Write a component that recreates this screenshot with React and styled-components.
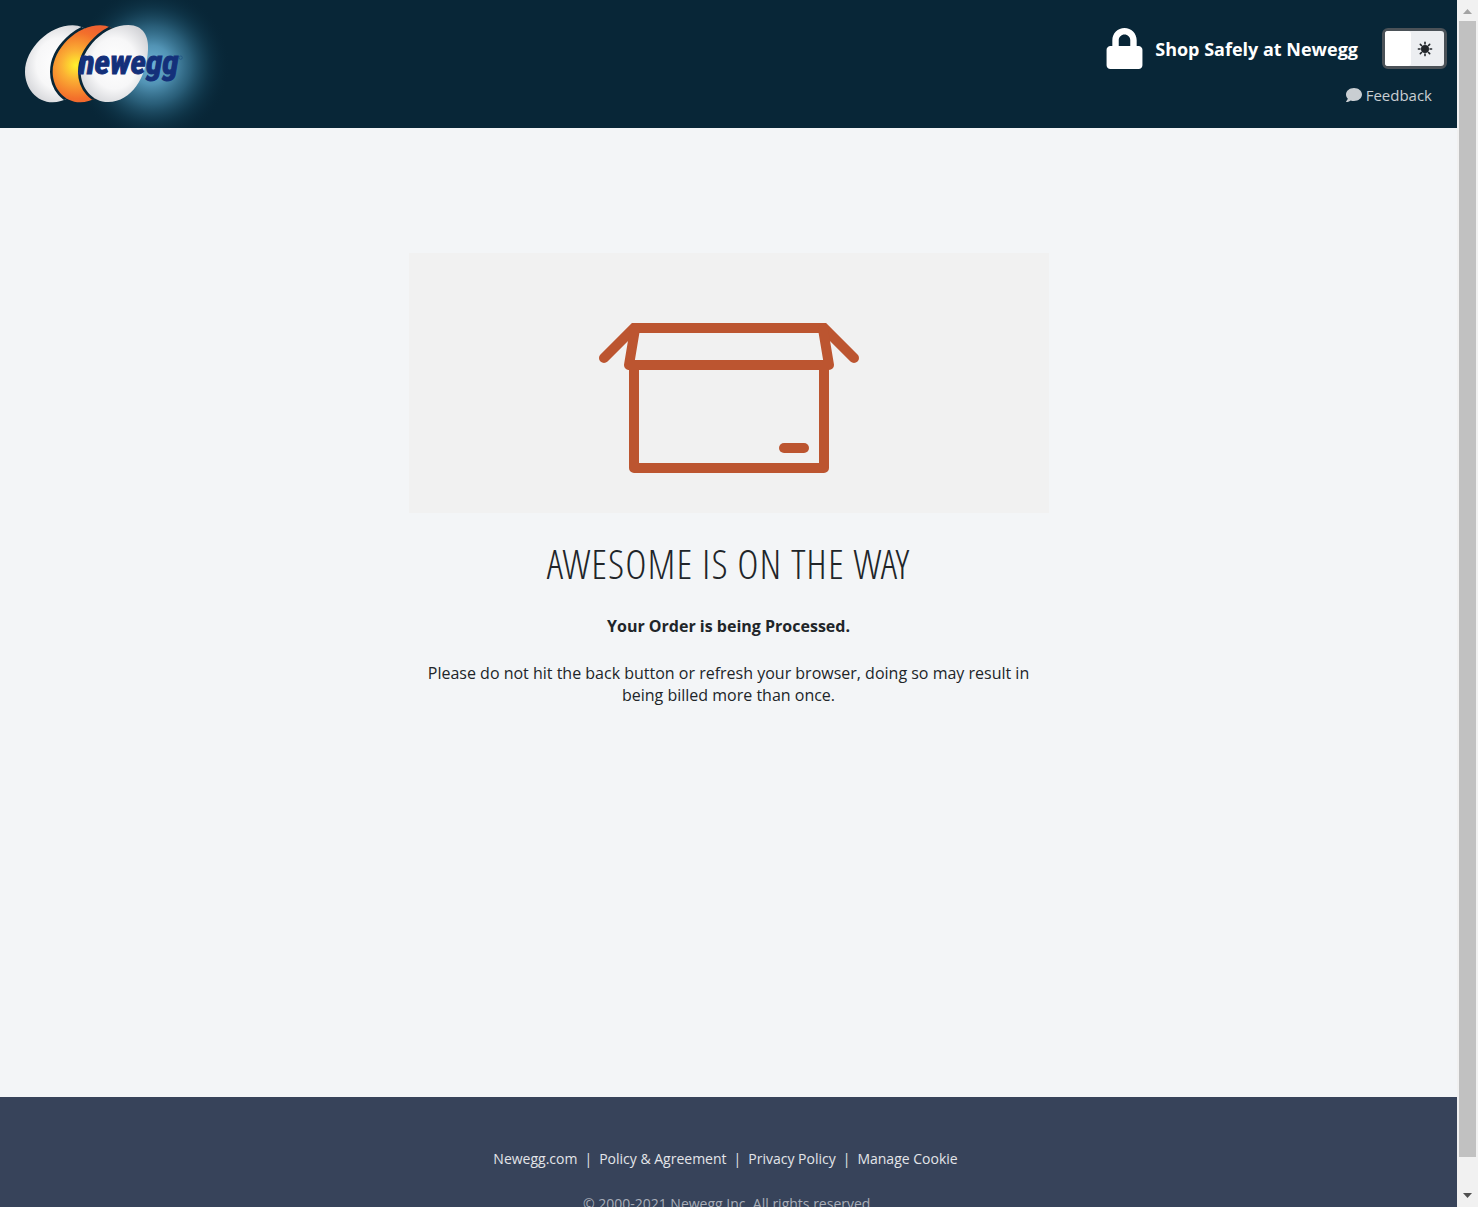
import React from "react";
import styled, { createGlobalStyle } from "styled-components";
import { FaLock, FaComment } from "react-icons/fa";

const GlobalStyle = createGlobalStyle`
  * { box-sizing: border-box; }
  body {
    margin: 0;
    background: #f3f5f7;
    color: #212529;
    font-family: "Open Sans", "Noto Sans", sans-serif;
    font-size: 16px;
    line-height: 22px;
  }
`;

const Shell = styled.div`
  display: flex;
  height: 100vh;
  overflow: hidden;
`;

const Page = styled.div`
  flex: 1;
  min-width: 0;
  overflow: hidden;
`;

const Header = styled.header`
  display: flex;
  justify-content: space-between;
  height: 128px;
  background: #082637;
  color: #fff;
`;

const LogoLink = styled.a`
  display: block;
  line-height: 0;
`;

const HeaderSide = styled.div`
  display: flex;
  flex-direction: column;
  align-items: flex-end;
  gap: 15px;
  padding: 28px 10px 0 0;
`;

const SafeRow = styled.div`
  display: flex;
  align-items: center;
`;

const SafeText = styled.strong`
  margin: 0 24px 0 10px;
  font-size: 18px;
  font-weight: 700;
`;

const Toggle = styled.label`
  display: grid;
  grid-template-columns: 26px 1fr;
  width: 65px;
  height: 41px;
  border: 3px solid #4b5258;
  border-radius: 6px;
  background: #eceef1;
  color: #212529;
  cursor: pointer;
`;

const ToggleInput = styled.input`
  appearance: none;
  margin: 0;
  background: #fff;
  border-radius: 3px;
  cursor: pointer;
`;

const ToggleIcon = styled.span`
  display: flex;
  align-items: center;
  justify-content: center;
  padding-right: 5px;
`;

const FeedbackLink = styled.a`
  display: flex;
  align-items: center;
  gap: 4px;
  margin-right: 15px;
  color: #c9ced2;
  font-size: 15px;
  text-decoration: none;
`;

const Main = styled.main`
  display: flex;
  flex-direction: column;
  align-items: center;
  min-height: calc(100vh - 238px);
  padding-top: 125px;
  text-align: center;
`;

const Message = styled.section`
  width: 100%;
  max-width: 640px;
`;

const Illustration = styled.svg`
  display: block;
  width: 100%;
  background: #f1f1f1;
`;

const Title = styled.h1`
  margin: 26px 0 0;
  font-family: "Open Sans Condensed Light", "Open Sans Condensed", "Open Sans", sans-serif;
  font-size: 41px;
  font-weight: 300;
  line-height: 48px;
  letter-spacing: 1px;
  text-transform: uppercase;
`;

const Status = styled.p`
  margin: 28px 0 0;
  font-weight: 700;
`;

const Note = styled.p`
  margin: 25px 0 0;
`;

const Footer = styled.footer`
  padding: 51px 0 32px;
  background: #37435a;
  color: #e3e5e9;
  font-size: 14px;
  text-align: center;
`;

const FooterNav = styled.nav`
  display: flex;
  justify-content: center;
  gap: 7px;
  padding-right: 6px;
`;

const FooterLink = styled.a`
  color: inherit;
  text-decoration: none;
`;

const Copyright = styled.p`
  margin: 23px 0 0;
  color: #a9aeb8;
`;

const ScrollRail = styled.div`
  display: flex;
  flex-direction: column;
  align-items: center;
  width: 21px;
  background: #f1f1f1;
`;

const ScrollArrow = styled.svg`
  flex: none;
  width: 17px;
  height: 21px;
  fill: ${(p) => p.$color};
`;

const ScrollThumb = styled.div`
  flex: 1;
  width: 17px;
  margin-bottom: 29px;
  background: #c1c1c1;
`;

const EGG =
  "M385 75C430 75 447 110 444 150C440 230 395 306 325 306C275 306 242 262 242 215C242 145 315 75 385 75Z";

function Logo() {
  return (
    <svg width="240" height="128" viewBox="0 0 720 384" role="img" aria-label="Newegg">
      <defs>
        <radialGradient id="glow">
          <stop offset="0" stopColor="#6fb4d8" />
          <stop offset="0.25" stopColor="#5a9fc2" stopOpacity="0.9" />
          <stop offset="0.5" stopColor="#3d7f9f" stopOpacity="0.62" />
          <stop offset="0.75" stopColor="#215973" stopOpacity="0.25" />
          <stop offset="1" stopColor="#082637" stopOpacity="0" />
        </radialGradient>
        <radialGradient id="shell" cx="0.5" cy="0.5" r="0.6">
          <stop offset="0" stopColor="#fff" />
          <stop offset="0.55" stopColor="#f7f7f8" />
          <stop offset="1" stopColor="#cfd0d4" />
        </radialGradient>
        <radialGradient id="yolk" gradientUnits="userSpaceOnUse" cx="312" cy="195" r="125">
          <stop offset="0" stopColor="#fff22d" />
          <stop offset="0.35" stopColor="#fbb034" />
          <stop offset="0.8" stopColor="#f36f2b" />
          <stop offset="1" stopColor="#ee6230" />
        </radialGradient>
        <clipPath id="clipLeft">
          <path d={EGG} transform="translate(-167 1)" />
        </clipPath>
        <clipPath id="clipMiddle">
          <path d={EGG} transform="translate(-84 1)" />
        </clipPath>
      </defs>
      <circle cx="455" cy="195" r="235" fill="url(#glow)" />
      <path d={EGG} transform="translate(-167 1)" fill="url(#shell)" />
      <g clipPath="url(#clipLeft)">
        <path d={EGG} transform="translate(-84 1)" fill="none" stroke="#082637" strokeWidth="16" />
      </g>
      <path d={EGG} transform="translate(-84 1)" fill="url(#yolk)" />
      <g clipPath="url(#clipMiddle)">
        <path d={EGG} fill="none" stroke="#082637" strokeWidth="16" />
      </g>
      <path d={EGG} fill="url(#shell)" />
      <text
        x="236"
        y="222"
        fill="#14307a"
        stroke="#14307a"
        strokeWidth="3"
        fontFamily="'Liberation Sans Narrow', 'Roboto Condensed', 'Liberation Sans', sans-serif"
        fontSize="100"
        fontStyle="italic"
        fontWeight="700"
      >
        newegg
      </text>
      <circle cx="542" cy="173" r="5" fill="none" stroke="#1d4f83" strokeWidth="2" />
    </svg>
  );
}

function SunIcon() {
  const rays = [0, 45, 90, 135, 180, 225, 270, 315];
  return (
    <svg width="16" height="16" viewBox="-8 -8 16 16" aria-hidden="true">
      <circle r="4" fill="currentColor" />
      {rays.map((angle) => (
        <path
          key={angle}
          d="M0 -5V-6.6"
          transform={`rotate(${angle})`}
          stroke="currentColor"
          strokeWidth="1.6"
          strokeLinecap="round"
        />
      ))}
    </svg>
  );
}

function OpenBox() {
  return (
    <Illustration viewBox="0 0 640 260" role="img" aria-label="Open shipping box">
      <g fill="none" stroke="#bc5530" strokeWidth="10" strokeLinecap="round" strokeLinejoin="round">
        <path d="M225 112V215H415V112" />
        <path d="M195 105L225 75H415L445 105" strokeLinejoin="miter" />
        <path d="M226 76L220 112H420L414 76" />
        <path d="M375 195H395" />
      </g>
    </Illustration>
  );
}

export default function App() {
  return (
    <>
      <GlobalStyle />
      <Shell>
        <Page>
          <Header>
            <LogoLink href="#home"><Logo /></LogoLink>
            <HeaderSide>
              <SafeRow>
                <FaLock size={41} aria-hidden="true" />
                <SafeText>Shop Safely at Newegg</SafeText>
                <Toggle>
                  <ToggleInput type="checkbox" role="switch" aria-label="Dark mode" />
                  <ToggleIcon><SunIcon /></ToggleIcon>
                </Toggle>
              </SafeRow>
              <FeedbackLink href="#feedback">
                <FaComment size={16} aria-hidden="true" />
                Feedback
              </FeedbackLink>
            </HeaderSide>
          </Header>
          <Main>
            <Message>
              <OpenBox />
              <Title>Awesome is on the way</Title>
              <Status>Your Order is being Processed.</Status>
              <Note>
                Please do not hit the back button or refresh your browser, doing so may result in
                being billed more than once.
              </Note>
            </Message>
          </Main>
          <Footer>
            <FooterNav>
              <FooterLink href="#newegg">Newegg.com</FooterLink>
              <span>|</span>
              <FooterLink href="#policy">Policy &amp; Agreement</FooterLink>
              <span>|</span>
              <FooterLink href="#privacy">Privacy Policy</FooterLink>
              <span>|</span>
              <FooterLink href="#cookie">Manage Cookie</FooterLink>
            </FooterNav>
            <Copyright>© 2000-2021 Newegg Inc. All rights reserved.</Copyright>
          </Footer>
        </Page>
        <ScrollRail aria-hidden="true">
          <ScrollArrow viewBox="0 0 17 21" $color="#a3a3a3"><path d="M4 14L8.5 9L13 14Z" /></ScrollArrow>
          <ScrollThumb />
          <ScrollArrow viewBox="0 0 17 21" $color="#505050"><path d="M4 7L8.5 12L13 7Z" /></ScrollArrow>
        </ScrollRail>
      </Shell>
    </>
  );
}
